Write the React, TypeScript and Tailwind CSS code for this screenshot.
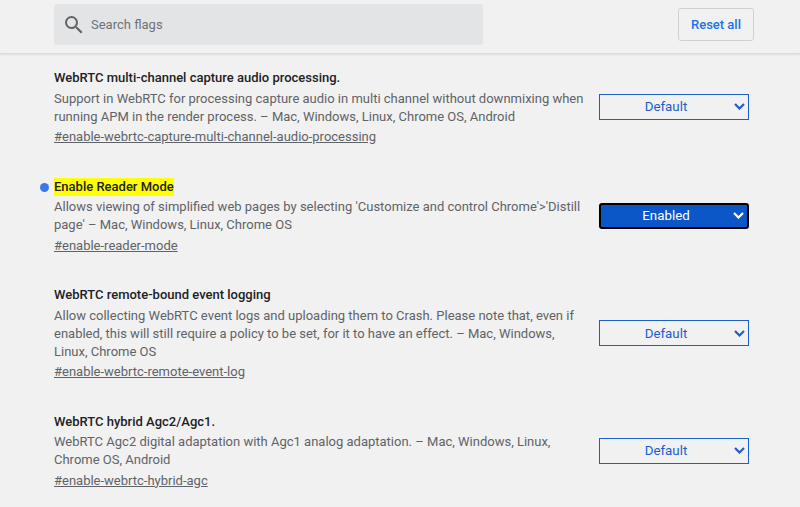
interface FlagRowProps {
  title: string;
  description: string;
  link: string;
  value: string;
  active?: boolean;
}

const flags: FlagRowProps[] = [
  {
    title: 'WebRTC multi-channel capture audio processing.',
    description:
      'Support in WebRTC for processing capture audio in multi channel without downmixing when running APM in the render process. – Mac, Windows, Linux, Chrome OS, Android',
    link: '#enable-webrtc-capture-multi-channel-audio-processing',
    value: 'Default',
  },
  {
    title: 'Enable Reader Mode',
    description:
      "Allows viewing of simplified web pages by selecting 'Customize and control Chrome'>'Distill page' – Mac, Windows, Linux, Chrome OS",
    link: '#enable-reader-mode',
    value: 'Enabled',
    active: true,
  },
  {
    title: 'WebRTC remote-bound event logging',
    description:
      'Allow collecting WebRTC event logs and uploading them to Crash. Please note that, even if enabled, this will still require a policy to be set, for it to have an effect. – Mac, Windows, Linux, Chrome OS',
    link: '#enable-webrtc-remote-event-log',
    value: 'Default',
  },
  {
    title: 'WebRTC hybrid Agc2/Agc1.',
    description:
      'WebRTC Agc2 digital adaptation with Agc1 analog adaptation. – Mac, Windows, Linux, Chrome OS, Android',
    link: '#enable-webrtc-hybrid-agc',
    value: 'Default',
  },
];

function Chevron() {
  return (
    <svg className="w-[11px] h-[7px]" viewBox="0 0 11 7" fill="none" stroke="currentColor" strokeWidth={2.2}>
      <path d="M1 1l4.5 4.5L10 1" />
    </svg>
  );
}

function FlagRow({ title, description, link, value, active }: FlagRowProps) {
  return (
    <div className="relative flex items-center w-[695px]">
      {active && <div className="absolute left-[-14px] top-[5px] w-[9px] h-[9px] rounded-full bg-[#3b78e7]" />}
      <div className="w-[534px] shrink-0">
        <div className="h-[18px] leading-[18px] font-medium text-[#202124]">
          <span className={active ? 'inline-block bg-[#ffff00]' : ''}>{title}</span>
        </div>
        <p className="mt-[2.6px] leading-[18px] text-[#5f6368]">{description}</p>
        <div className="mt-[2.4px] h-[18px] leading-[18px] text-[#5f6368] underline">{link}</div>
      </div>
      <div
        className={
          active
            ? 'ml-[11px] mb-[1px] w-[150px] h-[26px] flex items-center rounded-[3px] border-2 border-black bg-[#0b57c7] text-white'
            : 'ml-[11px] mb-[1px] w-[150px] h-[26px] flex items-center border border-[#1a5fc9] text-[#1a5fc9]'
        }
      >
        <span className="flex-1 text-center text-[13.33px] pr-[2px] pt-[0.8px]">{value}</span>
        <span className="pr-[3px] flex">
          <Chevron />
        </span>
      </div>
    </div>
  );
}

export default function App() {
  return (
    <div className="w-[800px] h-[507px] overflow-hidden bg-[#f1f1f1] text-[13px] font-['Roboto',sans-serif]">
      {/* Header */}
      <div className="h-[54px] flex items-start border-b border-[#dcdcdc] shadow-[0_1px_2px_rgba(0,0,0,0.08)] pl-[54px]">
        <div className="mt-[4px] w-[429px] h-[41px] flex items-center rounded-[3px] bg-[#e3e4e6] pl-[8px]">
          <svg className="w-[24px] h-[24px] text-[#5f6368]" viewBox="0 0 24 24" fill="currentColor">
            <path d="M15.5 14h-.79l-.28-.27A6.471 6.471 0 0 0 16 9.5 6.5 6.5 0 1 0 9.5 16c1.61 0 3.09-.59 4.23-1.57l.27.28v.79l5 4.99L20.49 19l-4.99-5zm-6 0C7.01 14 5 11.99 5 9.5S7.01 5 9.5 5 14 7.01 14 9.5 11.99 14 9.5 14z" />
          </svg>
          <span className="ml-[5px] text-[#6f7377]">Search flags</span>
        </div>
        <button className="ml-[195px] mt-[8px] w-[76px] h-[33px] rounded-[3px] border border-[#d0d0d0] text-[#1a73e8] font-medium">
          Reset all
        </button>
      </div>

      {/* Flags */}
      <div className="pt-[15px] pl-[54px] flex flex-col gap-[31.6px]">
        {flags.map((flag) => (
          <FlagRow key={flag.link} {...flag} />
        ))}
      </div>
    </div>
  );
}
